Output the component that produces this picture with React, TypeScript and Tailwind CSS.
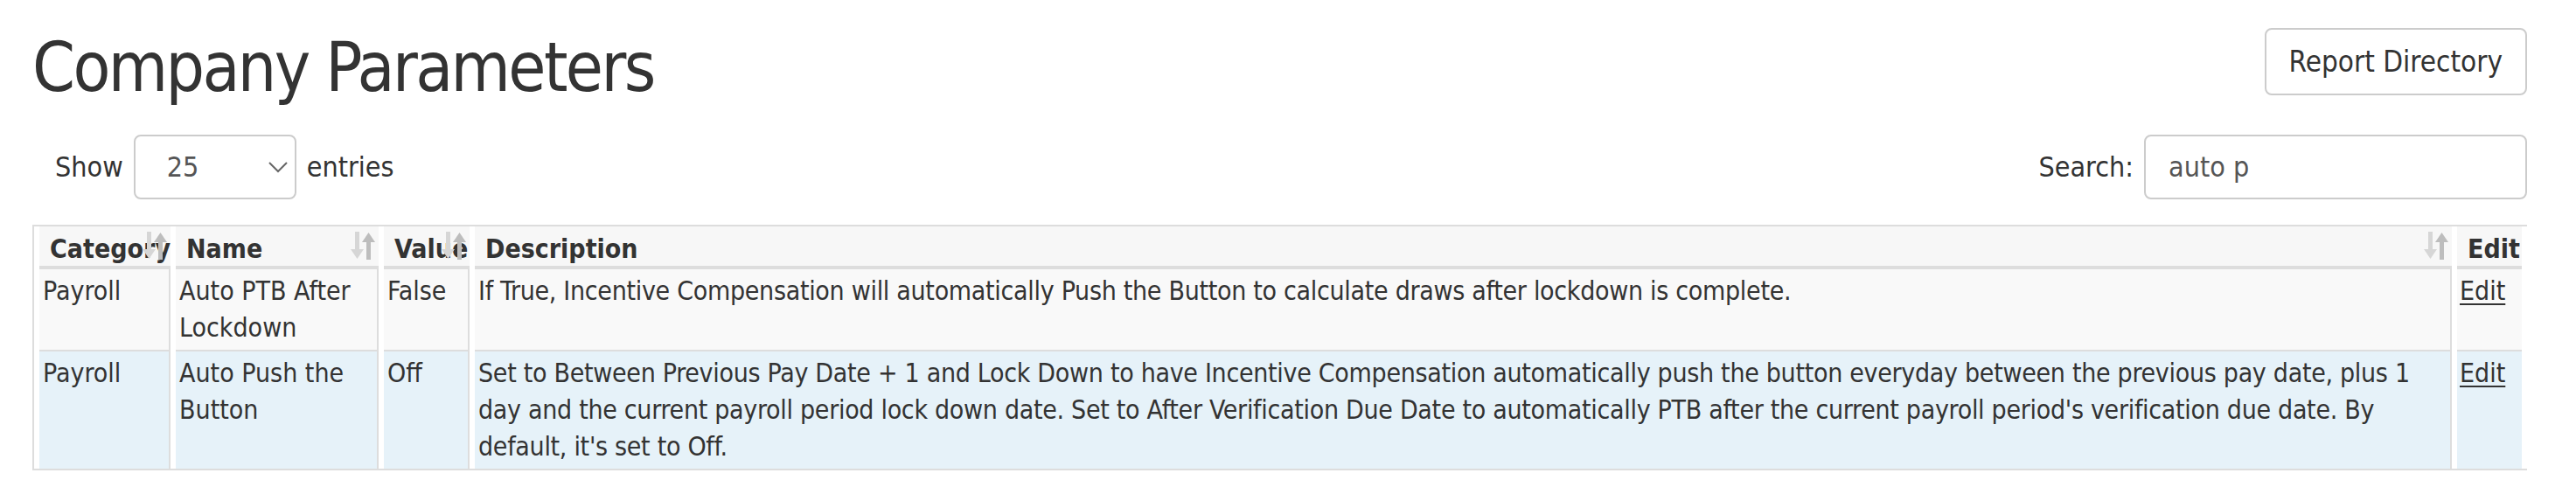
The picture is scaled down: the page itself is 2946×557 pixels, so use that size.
import React from "react";

const font = "font-['DejaVu_Sans_Condensed','DejaVu_Sans',sans-serif] [font-stretch:condensed]";

function SortIcon() {
  return (
    <svg width="28" height="32" viewBox="0 0 28 32" className="absolute right-[4px] top-[6px]">
      <rect x="5" y="0" width="5" height="22" fill="#d6d6d6" />
      <polygon points="0,20 15,20 7.5,31" fill="#d6d6d6" />
      <rect x="18" y="10" width="5" height="22" fill="#bdbdbd" />
      <polygon points="13,12 28,12 20.5,1" fill="#bdbdbd" />
    </svg>
  );
}

const rows = [
  {
    category: "Payroll",
    name: "Auto PTB After Lockdown",
    value: "False",
    description:
      "If True, Incentive Compensation will automatically Push the Button to calculate draws after lockdown is complete.",
    bg: "bg-[#f9f9f9]",
  },
  {
    category: "Payroll",
    name: "Auto Push the Button",
    value: "Off",
    description:
      "Set to Between Previous Pay Date + 1 and Lock Down to have Incentive Compensation automatically push the button everyday between the previous pay date, plus 1 day and the current payroll period lock down date. Set to After Verification Due Date to automatically PTB after the current payroll period's verification due date. By default, it's set to Off.",
    bg: "bg-[#e6f2f9]",
  },
];

export default function App() {
  return (
    <div className={`min-h-[557px] bg-white text-[#333] ${font}`}>
      <div className="ml-[37px] w-[2853px]">
        {/* header */}
        <div className="flex items-start justify-between">
          <h1 className="mt-[38px] text-[78px] leading-[78px] font-normal tracking-[-2.6px]">Company Parameters</h1>
          <button className="mt-[32px] h-[77px] px-[26px] border-2 border-[#ccc] rounded-[8px] bg-white text-[33px] text-[#333]">
            Report Directory
          </button>
        </div>

        {/* controls */}
        <div className="mt-[38px] flex items-center justify-between text-[32px]">
          <div className="flex items-center pl-[26px]">
            <span>Show</span>
            <div className="ml-[12px] flex h-[74px] w-[186px] items-center justify-between rounded-[8px] border-2 border-[#ccc] pl-[36px] pr-[8px] text-[#555]">
              <span>25</span>
              <svg width="22" height="14" viewBox="0 0 22 14">
                <polyline points="1,2 11,12 21,2" fill="none" stroke="#666" strokeWidth="2" />
              </svg>
            </div>
            <span className="ml-[12px]">entries</span>
          </div>
          <div className="flex items-center">
            <span>Search:</span>
            <div className="ml-[12px] flex h-[74px] w-[438px] items-center rounded-[8px] border-2 border-[#ccc] pl-[26px] text-[#555]">
              auto p
            </div>
          </div>
        </div>

        {/* table */}
        <table className="mt-[29px] w-[2853px] table-fixed border-separate border-spacing-x-[6px] border-spacing-y-0 border-l-2 border-t-2 border-b-2 border-[#ddd] text-[30px] leading-[42px]">
          <colgroup>
            <col className="w-[150px]" />
            <col className="w-[232px]" />
            <col className="w-[98px]" />
            <col />
            <col className="w-[74px]" />
          </colgroup>
          <thead>
            <tr>
              {["Category", "Name", "Value", "Description"].map((h) => (
                <th
                  key={h}
                  className="relative whitespace-nowrap bg-[#f7f7f7] border-b-4 border-[#ddd] pl-[12px] pt-[7px] pb-0 text-left font-bold leading-[38px]"
                >
                  {h}
                  <SortIcon />
                </th>
              ))}
              <th className="bg-[#f7f7f7] border-b-4 border-[#ddd] pl-[12px] pt-[7px] pb-0 text-left font-bold leading-[38px]">
                Edit
              </th>
            </tr>
          </thead>
          <tbody>
            {rows.map((r, i) => (
              <tr key={i}>
                {[r.category, r.name, r.value, r.description].map((c, j) => (
                  <td
                    key={j}
                    className={`${r.bg} ${i > 0 ? "border-t-2" : ""} ${j === 3 ? "tracking-[-0.3px]" : ""} border-r-2 border-[#ddd] px-[4px] pt-[4px] pb-[4px] align-top`}
                  >
                    {c}
                  </td>
                ))}
                <td className={`${r.bg} ${i > 0 ? "border-t-2" : ""} border-[#ddd] px-[3px] pt-[4px] pb-[4px] align-top`}>
                  <a href="#" className="underline decoration-2 underline-offset-4 text-[#333]">
                    Edit
                  </a>
                </td>
              </tr>
            ))}
          </tbody>
        </table>
      </div>
    </div>
  );
}
